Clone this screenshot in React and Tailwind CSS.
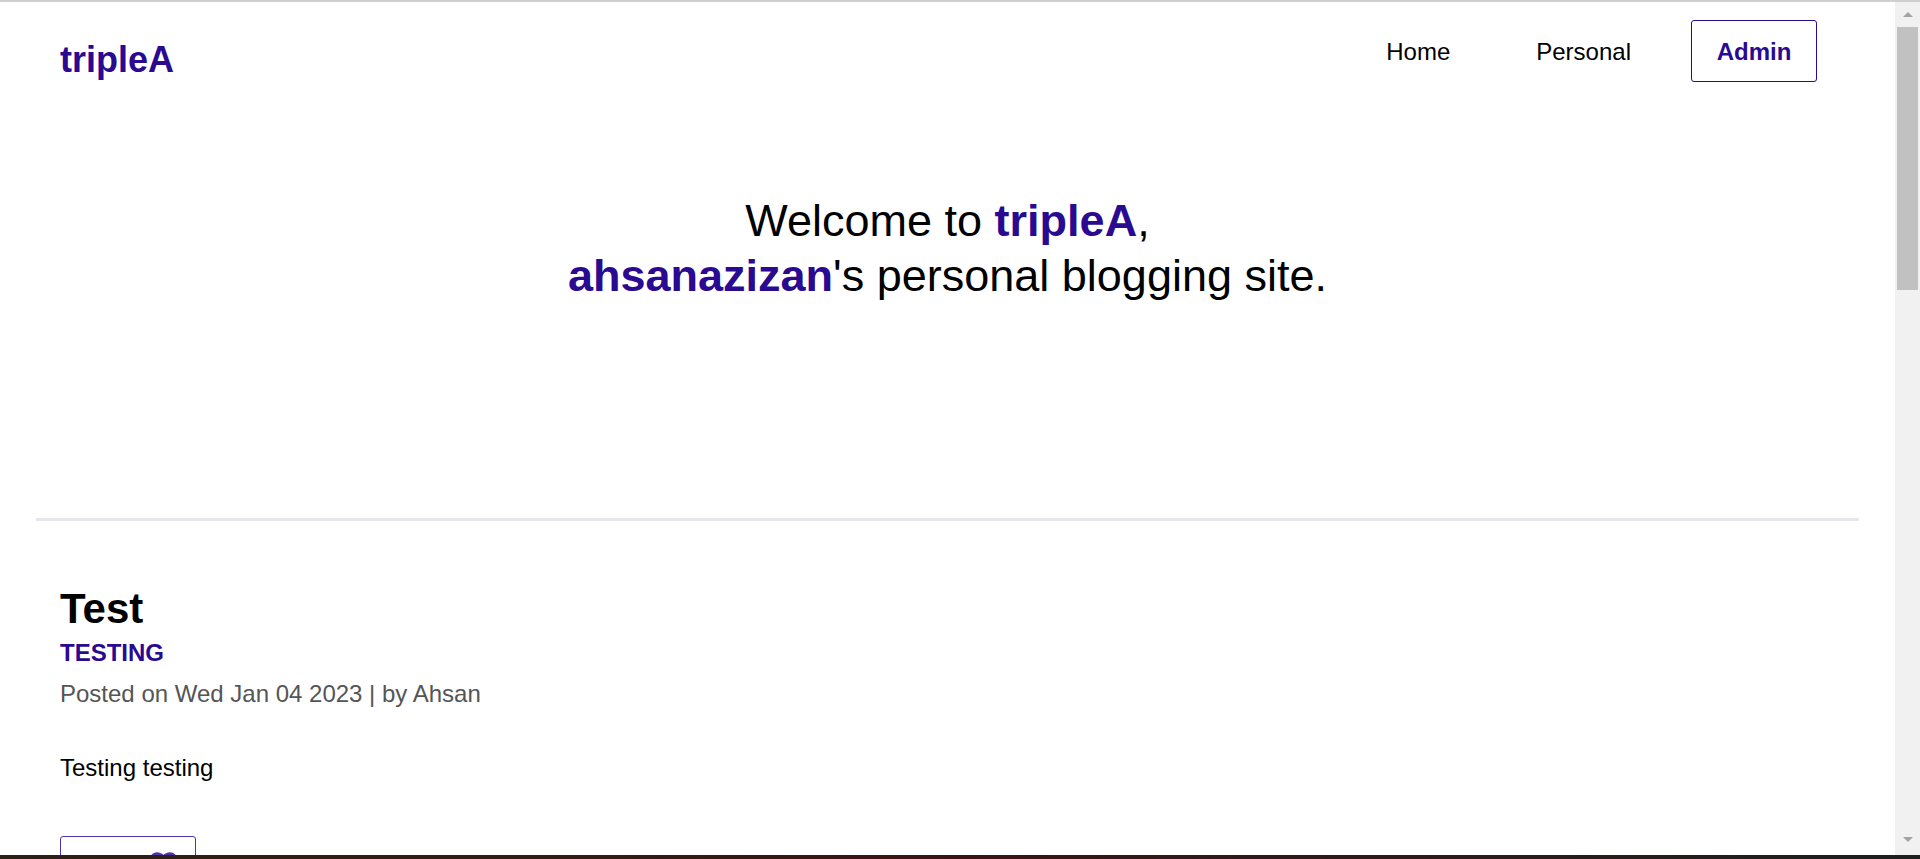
import React from "react";

const PURPLE = "text-[#290a91]";

function Scrollbar() {
  return (
    <div className="w-[25px] shrink-0 bg-[#f1f1f1] flex flex-col">
      {/* UP ARROW */}
      <div className="h-[25px] flex items-center justify-center">
        <div className="w-0 h-0 border-x-[5px] border-x-transparent border-b-[5px] border-b-[#a3a3a3]" />
      </div>
      {/* THUMB */}
      <div className="ml-[2px] w-[21px] h-[263px] bg-[#c1c1c1]" />
      <div className="flex-1" />
      {/* DOWN ARROW */}
      <div className="h-[28px] flex items-center justify-center pb-[3px]">
        <div className="w-0 h-0 border-x-[5px] border-x-transparent border-t-[5px] border-t-[#a3a3a3]" />
      </div>
    </div>
  );
}

function Header() {
  return (
    <header className="flex items-start justify-between pl-[60px] pr-[78px] pt-[18px]">
      <a className={`mt-[20px] text-[36px] leading-[40px] font-bold ${PURPLE}`}>tripleA</a>
      <nav className="flex items-center text-[24px] leading-[28px]">
        <a className="pt-[2px] text-black">Home</a>
        <a className="pt-[2px] ml-[86px] text-black">Personal</a>
        <button
          className={`ml-[60px] w-[126px] h-[62px] pt-[2px] border border-[#290a91] rounded-[3px] font-bold ${PURPLE}`}
        >
          Admin
        </button>
      </nav>
    </header>
  );
}

function Hero() {
  return (
    <section className="mt-[111px] text-center text-[45px] leading-[55px] text-black">
      <p>
        Welcome to <span className={`font-bold ${PURPLE}`}>tripleA</span>,
      </p>
      <p>
        <span className={`font-bold ${PURPLE}`}>ahsanazizan</span>'s personal blogging site.
      </p>
    </section>
  );
}

function Post() {
  return (
    <article className="pl-[60px] mt-[63px]">
      <h2 className="text-[42px] leading-[50px] font-bold text-black">Test</h2>
      <p className={`mt-[5px] text-[24px] leading-[28px] font-bold uppercase ${PURPLE}`}>Testing</p>
      <p className="mt-[13px] text-[24px] leading-[28px] text-[#555555]">
        Posted on Wed Jan 04 2023 | by Ahsan
      </p>
      <p className="mt-[46px] text-[24px] leading-[28px] text-black">Testing testing</p>
      <button className="mt-[54px] w-[136px] h-[60px] border border-[#4f33b0] rounded-[3px] flex justify-end pt-[15px] pr-[18px]">
        <svg width="27" height="25" viewBox="0 0 24 22" fill="#4f33b0">
          <path d="M12 21.5 10.3 20C4.2 14.5 0 10.8 0 6.3 0 2.7 2.8 0 6.3 0c2 0 4 .9 5.7 2.4C13.7.9 15.7 0 17.7 0 21.2 0 24 2.7 24 6.3c0 4.5-4.2 8.2-10.3 13.7L12 21.5z" />
        </svg>
      </button>
    </article>
  );
}

export default function App() {
  return (
    <div className="h-[859px] w-full overflow-hidden flex flex-col bg-white font-['Liberation_Sans',Arial,sans-serif]">
      {/* BROWSER TOP EDGE */}
      <div className="h-[2px] bg-[#cfcfcf] shrink-0" />

      <div className="flex flex-1 min-h-0">
        <main className="flex-1 min-w-0 overflow-hidden">
          <Header />
          <Hero />
          <hr className="mt-[215px] mx-[36px] h-[3px] border-0 bg-[#e5e7eb]" />
          <Post />
        </main>
        <Scrollbar />
      </div>

      {/* TASKBAR PEEK */}
      <div className="h-[4px] shrink-0 bg-gradient-to-r from-[#2b2117] via-[#3a1414] to-[#1d1f1f]" />
    </div>
  );
}
